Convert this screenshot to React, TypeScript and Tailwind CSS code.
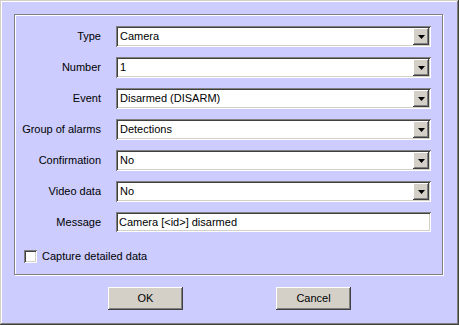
import React from "react";

const rows = [
  { label: "Type", value: "Camera" },
  { label: "Number", value: "1" },
  { label: "Event", value: "Disarmed (DISARM)" },
  { label: "Group of alarms", value: "Detections" },
  { label: "Confirmation", value: "No" },
  { label: "Video data", value: "No" },
];

const sunken =
  "shadow-[inset_1px_1px_#808080,inset_-1px_-1px_#ffffff,inset_2px_2px_#404040,inset_-2px_-2px_#d4d0c8]";
const raised =
  "shadow-[inset_-1px_-1px_#404040,inset_1px_1px_#ffffff,inset_-2px_-2px_#808080,inset_2px_2px_#d4d0c8]";

function Combo({ value }: { value: string }) {
  return (
    <div className={`ml-[15px] w-[315px] h-[21px] bg-white p-[2px] flex items-center ${sunken}`}>
      <span className="flex-1 pl-[2px] leading-[17px]">{value}</span>
      <div className={`w-[16px] h-[17px] bg-[#d4d0c8] flex items-center justify-center ${raised}`}>
        <svg width="7" height="4" viewBox="0 0 7 4">
          <polygon points="0,0 7,0 3.5,4" fill="#000" />
        </svg>
      </div>
    </div>
  );
}

function Button({ children }: { children: React.ReactNode }) {
  return (
    <button className={`w-[75px] h-[23px] bg-[#d4d0c8] flex items-center justify-center ${raised}`}>
      {children}
    </button>
  );
}

export default function App() {
  return (
    <div
      className="w-[459px] h-[325px] bg-[#ccccff] text-black text-[11px] pl-[14px] pt-[14px] shadow-[inset_-1px_-1px_#404040,inset_1px_1px_#d4d0c8,inset_-2px_-2px_#808080,inset_2px_2px_#ffffff]"
      style={{ fontFamily: '"Liberation Sans", Arial, sans-serif' }}
    >
      {/* group box */}
      <div className="w-[429px] h-[261px] border border-[#808080] shadow-[inset_1px_1px_#ffffff,1px_1px_#ffffff] pt-[11px] flex flex-col">
        <div className="flex flex-col gap-[10px]">
          {rows.map((r) => (
            <div key={r.label} className="flex items-center h-[21px]">
              <div className="w-[86px] text-right whitespace-nowrap">{r.label}</div>
              <Combo value={r.value} />
            </div>
          ))}
          <div className="flex items-center h-[20px]">
            <div className="w-[86px] text-right">Message</div>
            <div className={`ml-[15px] w-[315px] h-[20px] bg-white px-[3px] flex items-center ${sunken}`}>
              Camera [&lt;id&gt;] disarmed
            </div>
          </div>
        </div>
        <div className="flex items-center mt-[16px] ml-[9px]">
          <div className={`w-[13px] h-[13px] bg-white ${sunken}`} />
          <span className="ml-[5px]">Capture detailed data</span>
        </div>
      </div>
      <div className="flex justify-center gap-[93px] mt-[12px] pr-[14px]">
        <Button>OK</Button>
        <Button>Cancel</Button>
      </div>
    </div>
  );
}
